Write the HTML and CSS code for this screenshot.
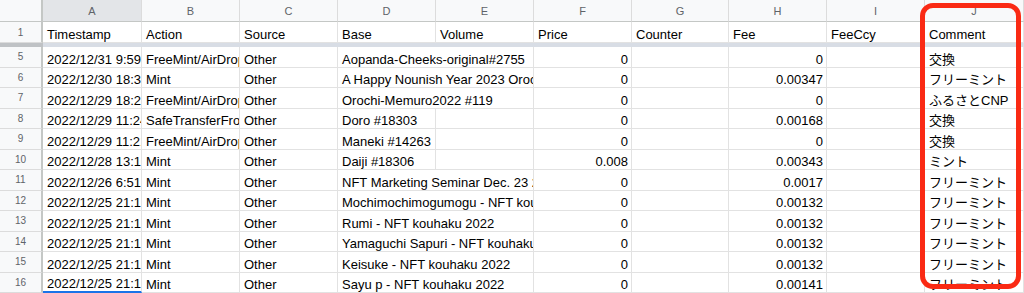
FILE: index.html
```html
<html>
<head>
<meta http-equiv="content-type" content="text/html; charset=utf-8">
<link rel="stylesheet" href="styles.css">
<title>Sheet</title>
</head>
<body>
<div class=sheet>
<div class="row heads">
<div class=corner></div><div class="hd here">A</div><div class=hd>B</div><div class=hd>C</div><div class=hd>D</div><div class=hd>E</div><div class=hd>F</div><div class=hd>G</div><div class=hd>H</div><div class=hd>I</div><div class=hd>J</div>
</div>
<div class="row first">
<div class=num>1</div><div class=c>Timestamp</div><div class=c>Action</div><div class=c>Source</div><div class=c>Base</div><div class=c>Volume</div><div class=c>Price</div><div class=c>Counter</div><div class=c>Fee</div><div class=c>FeeCcy</div><div class=c>Comment</div>
</div>
<div class=freeze><div class=fznum></div><div class=fzbody></div></div>
<div class=row>
<div class=num>5</div><div class=c>2022/12/31 9:59:35</div><div class=c>FreeMint/AirDrop</div><div class=c>Other</div><div class="c wide">Aopanda-Cheeks-original#2755</div><div class="c n">0</div><div class=c></div><div class="c n">0</div><div class=c></div><div class=c>交換</div>
</div>
<div class=row>
<div class=num>6</div><div class=c>2022/12/30 18:35:11</div><div class=c>Mint</div><div class=c>Other</div><div class="c wide">A Happy Nounish Year 2023 Orochi</div><div class="c n">0</div><div class=c></div><div class="c n">0.00347</div><div class=c></div><div class=c>フリーミント</div>
</div>
<div class=row>
<div class=num>7</div><div class=c>2022/12/29 18:22:40</div><div class=c>FreeMint/AirDrop</div><div class=c>Other</div><div class="c wide">Orochi-Memuro2022 #119</div><div class="c n">0</div><div class=c></div><div class="c n">0</div><div class=c></div><div class=c>ふるさとCNP</div>
</div>
<div class=row>
<div class=num>8</div><div class=c>2022/12/29 11:24:07</div><div class=c>SafeTransferFrom</div><div class=c>Other</div><div class=c>Doro #18303</div><div class=c></div><div class="c n">0</div><div class=c></div><div class="c n">0.00168</div><div class=c></div><div class=c>交換</div>
</div>
<div class=row>
<div class=num>9</div><div class=c>2022/12/29 11:21:19</div><div class=c>FreeMint/AirDrop</div><div class=c>Other</div><div class=c>Maneki #14263</div><div class=c></div><div class="c n">0</div><div class=c></div><div class="c n">0</div><div class=c></div><div class=c>交換</div>
</div>
<div class=row>
<div class=num>10</div><div class=c>2022/12/28 13:10:02</div><div class=c>Mint</div><div class=c>Other</div><div class=c>Daiji #18306</div><div class=c></div><div class="c n">0.008</div><div class=c></div><div class="c n">0.00343</div><div class=c></div><div class=c>ミント</div>
</div>
<div class=row>
<div class=num>11</div><div class=c>2022/12/26 6:51:28</div><div class=c>Mint</div><div class=c>Other</div><div class="c wide">NFT Marketing Seminar Dec. 23 2022</div><div class="c n">0</div><div class=c></div><div class="c n">0.0017</div><div class=c></div><div class=c>フリーミント</div>
</div>
<div class=row>
<div class=num>12</div><div class=c>2022/12/25 21:15:47</div><div class=c>Mint</div><div class=c>Other</div><div class="c wide">Mochimochimogumogu - NFT kouhaku 2022</div><div class="c n">0</div><div class=c></div><div class="c n">0.00132</div><div class=c></div><div class=c>フリーミント</div>
</div>
<div class=row>
<div class=num>13</div><div class=c>2022/12/25 21:15:47</div><div class=c>Mint</div><div class=c>Other</div><div class="c wide">Rumi - NFT kouhaku 2022</div><div class="c n">0</div><div class=c></div><div class="c n">0.00132</div><div class=c></div><div class=c>フリーミント</div>
</div>
<div class=row>
<div class=num>14</div><div class=c>2022/12/25 21:15:47</div><div class=c>Mint</div><div class=c>Other</div><div class="c wide">Yamaguchi Sapuri - NFT kouhaku 2022</div><div class="c n">0</div><div class=c></div><div class="c n">0.00132</div><div class=c></div><div class=c>フリーミント</div>
</div>
<div class=row>
<div class=num>15</div><div class=c>2022/12/25 21:15:47</div><div class=c>Mint</div><div class=c>Other</div><div class="c wide">Keisuke - NFT kouhaku 2022</div><div class="c n">0</div><div class=c></div><div class="c n">0.00132</div><div class=c></div><div class=c>フリーミント</div>
</div>
<div class=row>
<div class=num>16</div><div class="c sel">2022/12/25 21:15:47</div><div class=c>Mint</div><div class=c>Other</div><div class="c wide">Sayu p - NFT kouhaku 2022</div><div class="c n">0</div><div class=c></div><div class="c n">0.00141</div><div class=c></div><div class=c>フリーミント</div>
</div>
<div class=mark></div>
</div>
</body>
</html>
```

FILE: styles.css
```css
html,body{margin:0;padding:0;background:#ffffff;overflow:hidden}
body{font-family:"Liberation Sans",Arial,"Noto Sans CJK JP",sans-serif;color:#000000}
.sheet{position:relative;width:1024px;height:293px;overflow:hidden}
.row{display:grid;grid-template-columns:43px 99px 98px 98px 98px 98px 98px 97px 98px 98px 99px;height:20.5px}
.heads{height:22px}
.first{height:21px}
.corner{background:#f8f9fa;border-right:2px solid #c4c7c5;border-bottom:1px solid #c4c7c5;box-sizing:border-box}
.hd{background:#f8f9fa;border-right:1px solid #dcdcdc;border-bottom:1px solid #c4c7c5;box-sizing:border-box;
display:flex;align-items:center;justify-content:center;font-size:11px;color:#5f6368;padding-top:1px}
.hd.here{background:#e3e5e8}
.num{background:#f8f9fa;border-right:2px solid #c4c7c5;border-bottom:1px solid #dcdcdc;box-sizing:border-box;
display:flex;align-items:center;justify-content:center;font-size:10px;color:#5f6368}
.c{border-right:1px solid #e2e2e2;border-bottom:1px solid #e2e2e2;box-sizing:border-box;overflow:hidden;white-space:nowrap;
font-size:13px;line-height:14px;padding:0 3px 0 4px;display:flex;align-items:flex-end}
.c.n{justify-content:flex-end}
.c.wide{grid-column:span 2}
.c.sel{border-bottom:2px solid #1a73e8}
.freeze{display:flex;height:4px}
.fznum{width:43px;background:#bfc2c5}
.fzbody{flex:1;background:#d8dde5}
.mark{position:absolute;left:920px;top:3px;width:101px;height:286px;box-sizing:border-box;
border:5px solid #fa2a14;border-radius:13px}
```
